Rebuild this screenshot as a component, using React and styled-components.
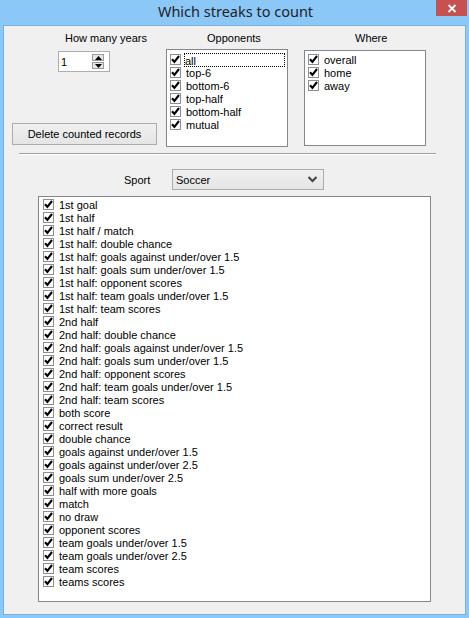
import React from "react";
import styled, { createGlobalStyle } from "styled-components";

const Global = createGlobalStyle`
  html, body { margin: 0; padding: 0; background: #8bc7f7; }
  body { font-family: "Liberation Sans", Arial, sans-serif; font-size: 11px; color: #000; }
`;

const Window = styled.div`
  width: 469px;
  height: 618px;
  box-sizing: border-box;
  background: #8bc7f7;
  display: flex;
  flex-direction: column;
  padding: 0 3px 3px 3px;
`;

const TitleBar = styled.div`
  height: 25px;
  position: relative;
  display: flex;
  justify-content: center;
  align-items: flex-start;
`;

const Title = styled.div`
  font-family: "Noto Sans", "Open Sans", sans-serif;
  font-size: 14.5px;
  line-height: 22px;
  color: #1f1f1f;
  margin-left: 2px;
`;

const CloseButton = styled.div`
  position: absolute;
  right: -1px;
  top: 0;
  width: 31px;
  height: 16px;
  background: #c75050;
  color: #fff;
  display: flex;
  align-items: center;
  justify-content: center;
`;

const Content = styled.div`
  flex: 1;
  background: #f0f0f0;
  border: 1px solid #7aaedb;
  display: flex;
  flex-direction: column;
`;

const TopRow = styled.div`
  display: flex;
  align-items: flex-start;
  padding: 6px 0 0 8px;
`;

const Column = styled.div`
  display: flex;
  flex-direction: column;
  width: ${(p) => p.$w}px;
  margin-left: ${(p) => p.$ml || 0}px;
`;

const Label = styled.div`
  line-height: 13px;
  height: 13px;
  white-space: nowrap;
  margin-left: ${(p) => p.$ml}px;
`;

const SpinBox = styled.div`
  margin-top: 6px;
  margin-left: 46px;
  width: 52px;
  height: 21px;
  box-sizing: border-box;
  border: 1px solid #abadb3;
  background: #fff;
  display: flex;
  align-items: center;
  justify-content: space-between;
  padding: 0 5px 0 2px;
`;

const SpinValue = styled.span`
  line-height: 13px;
  padding-top: 1px;
`;

const SpinButtons = styled.div`
  display: flex;
  flex-direction: column;
  gap: 1px;
`;

const SpinBtn = styled.div`
  width: 12px;
  height: 7px;
  box-sizing: border-box;
  border: 1px solid #9a9a9a;
  background: #e6e6e6;
  display: flex;
  align-items: center;
  justify-content: center;
`;

const Button = styled.div`
  margin-top: 51px;
  height: 22px;
  box-sizing: border-box;
  border: 1px solid #acacac;
  background: linear-gradient(#f0f0f0, #e5e5e5);
  display: flex;
  align-items: center;
  justify-content: center;
  color: #000;
`;

const ListBox = styled.div`
  margin-top: ${(p) => p.$mt}px;
  height: ${(p) => p.$h}px;
  box-sizing: border-box;
  border: 1px solid #828790;
  background: #fff;
  padding: ${(p) => p.$pt}px 2px 0 ${(p) => p.$pl}px;
  display: flex;
  flex-direction: column;
  overflow: hidden;
`;

const Item = styled.div`
  display: flex;
  align-items: flex-start;
  height: 13px;
  flex: none;
`;

const Box = styled.span`
  margin-top: 1px;
  width: 11px;
  height: 11px;
  box-sizing: border-box;
  border: 1px solid #8e8f8f;
  background: #fff;
  display: flex;
  align-items: center;
  justify-content: center;
  flex: none;
`;

const ItemText = styled.span`
  margin: 1px 0 0 4px;
  line-height: 13px;
  height: 13px;
  white-space: nowrap;
  padding: 0 1px;
  ${(p) =>
    p.$focus &&
    `outline: 1px dotted #000; outline-offset: -1px; flex: 1; margin-left: 3px; margin-top: 0; line-height: 14px; padding-top: 1px; box-sizing: border-box; height: 14px;`}
`;

const Separator = styled.div`
  margin: 6px 0 0 15px;
  width: 417px;
  height: 1px;
  background: #a0a0a0;
  border-bottom: 1px solid #fff;
`;

const SportRow = styled.div`
  display: flex;
  align-items: center;
  margin-top: 14px;
  padding-left: 120px;
`;

const SportLabel = styled.span`
  width: 48px;
`;

const Select = styled.div`
  width: 152px;
  height: 21px;
  box-sizing: border-box;
  border: 1px solid #acacac;
  background: linear-gradient(#f0f0f0, #e5e5e5);
  display: flex;
  align-items: center;
  justify-content: space-between;
  padding: 0 6px 0 3px;
`;

const BigList = styled(ListBox)`
  margin-left: 34px;
  width: 393px;
`;

const Check = () => (
  <Box>
    <svg width="9" height="9" viewBox="0 0 9 9">
      <polyline points="1,4.2 3.4,6.8 8,1" fill="none" stroke="#000" strokeWidth="2.1" strokeLinejoin="miter" />
    </svg>
  </Box>
);

const CheckItem = ({ text, focus }) => (
  <Item>
    <Check />
    <ItemText $focus={focus}>{text}</ItemText>
  </Item>
);

const opponents = ["all", "top-6", "bottom-6", "top-half", "bottom-half", "mutual"];
const where = ["overall", "home", "away"];
const streaks = [
  "1st goal",
  "1st half",
  "1st half / match",
  "1st half: double chance",
  "1st half: goals against under/over 1.5",
  "1st half: goals sum under/over 1.5",
  "1st half: opponent scores",
  "1st half: team goals under/over 1.5",
  "1st half: team scores",
  "2nd half",
  "2nd half: double chance",
  "2nd half: goals against under/over 1.5",
  "2nd half: goals sum under/over 1.5",
  "2nd half: opponent scores",
  "2nd half: team goals under/over 1.5",
  "2nd half: team scores",
  "both score",
  "correct result",
  "double chance",
  "goals against under/over 1.5",
  "goals against under/over 2.5",
  "goals sum under/over 2.5",
  "half with more goals",
  "match",
  "no draw",
  "opponent scores",
  "team goals under/over 1.5",
  "team goals under/over 2.5",
  "team scores",
  "teams scores",
];

export default function App() {
  return (
    <>
      <Global />
      <Window>
        <TitleBar>
          <Title>Which streaks to count</Title>
          <CloseButton>
            <svg width="10" height="9" viewBox="0 0 10 9">
              <path d="M1.5 1 L8.5 8 M8.5 1 L1.5 8" stroke="#fff" strokeWidth="1.8" />
            </svg>
          </CloseButton>
        </TitleBar>
        <Content>
          <TopRow>
            <Column $w={145}>
              <Label $ml={53}>How many years</Label>
              <SpinBox>
                <SpinValue>1</SpinValue>
                <SpinButtons>
                  <SpinBtn>
                    <svg width="7" height="4" viewBox="0 0 7 4">
                      <path d="M0 4 L3.5 0 L7 4 Z" fill="#000" />
                    </svg>
                  </SpinBtn>
                  <SpinBtn>
                    <svg width="7" height="4" viewBox="0 0 7 4">
                      <path d="M0 0 L3.5 4 L7 0 Z" fill="#000" />
                    </svg>
                  </SpinBtn>
                </SpinButtons>
              </SpinBox>
              <Button>Delete counted records</Button>
            </Column>
            <Column $w={122} $ml={9}>
              <Label $ml={41}>Opponents</Label>
              <ListBox $mt={4} $h={98} $pt={3} $pl={3}>
                {opponents.map((o, i) => (
                  <CheckItem key={o} text={o} focus={i === 0} />
                ))}
              </ListBox>
            </Column>
            <Column $w={122} $ml={16}>
              <Label $ml={51}>Where</Label>
              <ListBox $mt={5} $h={96} $pt={2} $pl={3}>
                {where.map((o) => (
                  <CheckItem key={o} text={o} />
                ))}
              </ListBox>
            </Column>
          </TopRow>
          <Separator />
          <SportRow>
            <SportLabel>Sport</SportLabel>
            <Select>
              <span>Soccer</span>
              <svg width="9" height="7" viewBox="0 0 9 7">
                <path d="M0.5 1 L4.5 5 L8.5 1" fill="none" stroke="#444" strokeWidth="2" />
              </svg>
            </Select>
          </SportRow>
          <BigList $mt={6} $h={406} $pt={1} $pl={4}>
            {streaks.map((s) => (
              <CheckItem key={s} text={s} />
            ))}
          </BigList>
        </Content>
      </Window>
    </>
  );
}
